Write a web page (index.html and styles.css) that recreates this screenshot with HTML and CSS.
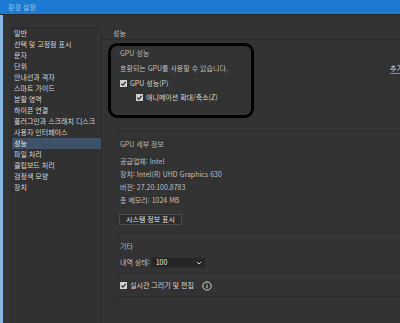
FILE: index.html
```html
<!DOCTYPE html>
<html lang="ko">
<head>
<meta charset="utf-8">
<link rel="stylesheet" href="styles.css">
</head>
<body>
<div class="titlebar">환경 설정</div>
<div class="window">
  <ul class="sidebar">
    <li>일반</li>
    <li>선택 및 고정점 표시</li>
    <li>문자</li>
    <li>단위</li>
    <li>안내선과 격자</li>
    <li>스마트 가이드</li>
    <li>분할 영역</li>
    <li>하이픈 연결</li>
    <li>플러그인과 스크래치 디스크</li>
    <li>사용자 인터페이스</li>
    <li class="active">성능</li>
    <li>파일 처리</li>
    <li>클립보드 처리</li>
    <li>검정색 모양</li>
    <li>장치</li>
  </ul>
  <div class="main">
    <div class="heading">성능</div>
    <section class="group gpu">
      <div class="annot"></div>
      <div class="title row">GPU 성능</div>
      <div class="row split"><span>호환되는 GPU를 사용할 수 있습니다.</span><span class="more">추가 정보...</span></div>
      <label class="row check"><span class="box"><svg viewBox="0 0 7 7" width="7" height="7"><rect x="0" y="0" width="7" height="7" fill="#cfcfcf"/><path d="M1.4 3.6 L2.9 5.1 L5.7 1.9" fill="none" stroke="#2a2a2a" stroke-width="1.2"/></svg></span>GPU 성능(P)</label>
      <label class="row check sub"><span class="box"><svg viewBox="0 0 7 7" width="7" height="7"><rect x="0" y="0" width="7" height="7" fill="#cfcfcf"/><path d="M1.4 3.6 L2.9 5.1 L5.7 1.9" fill="none" stroke="#2a2a2a" stroke-width="1.2"/></svg></span>애니메이션 확대/축소(Z)</label>
    </section>
    <section class="group details">
      <div class="title row">GPU 세부 정보</div>
      <div class="row info first">공급업체: Intel</div>
      <div class="row info">장치: Intel(R) UHD Graphics 630</div>
      <div class="row info">버전: 27.20.100.8783</div>
      <div class="row info">총 메모리: 1024 MB</div>
      <button class="btn">시스템 정보 표시</button>
    </section>
    <section class="group misc">
      <div class="title row">기타</div>
      <div class="row field">내역 상태: <span class="select">100<svg viewBox="0 0 6 4" width="6" height="4"><path d="M0.8 0.8 L3 3 L5.2 0.8" fill="none" stroke="#cfcfcf" stroke-width="1"/></svg></span></div>
    </section>
    <section class="group live">
      <label class="row check"><span class="box"><svg viewBox="0 0 7 7" width="7" height="7"><rect x="0" y="0" width="7" height="7" fill="#cfcfcf"/><path d="M1.4 3.6 L2.9 5.1 L5.7 1.9" fill="none" stroke="#2a2a2a" stroke-width="1.2"/></svg></span>실시간 그리기 및 편집<span class="infoicon"><svg viewBox="0 0 10 10" width="10" height="10"><circle cx="5" cy="5" r="4.2" fill="none" stroke="#cfcfcf" stroke-width="1"/><rect x="4.5" y="4.2" width="1" height="3.2" fill="#cfcfcf"/><rect x="4.5" y="2.5" width="1" height="1" fill="#cfcfcf"/></svg></span></label>
    </section>
  </div>
</div>
</body>
</html>
```

FILE: styles.css
```css
* { box-sizing: border-box; }
html, body {
  margin: 0;
  padding: 0;
  width: 400px;
  height: 323px;
  overflow: hidden;
  background: #333333;
  font-family: "Noto Sans CJK KR", "Noto Sans", sans-serif;
  font-size: 7px;
  color: #d2d2d2;
}
.titlebar {
  height: 15px;
  line-height: 14px;
  padding-left: 8px;
  background: #1c7ad2;
  border-bottom: 1px solid #262b30;
  color: #8fc0ec;
}
.window {
  display: flex;
  height: 308px;
  border-left: 3px solid #8ab6e2;
}
.sidebar {
  list-style: none;
  margin: 12px 0 0 8px;
  padding: 0;
  width: 91px;
  border: 1px solid #2a2a2a;
  border-bottom: none;
  background: #313131;
}
.sidebar li {
  height: 11px;
  line-height: 11px;
  padding-left: 2px;
  white-space: nowrap;
  color: #d4d4d4;
}
.sidebar li.active {
  background: #3e5167;
  color: #e6e6e6;
}
.main {
  flex: 1;
  min-width: 0;
}
.heading {
  margin-top: 12px;
  height: 13px;
  line-height: 12px;
  padding-left: 11px;
  border-bottom: 1px solid #2b2b2b;
  color: #bdbdbd;
}
.group {
  position: relative;
  margin-left: 13px;
  padding-left: 5px;
  border-bottom: 1px solid #2b2b2b;
}
.row {
  height: 11px;
  line-height: 11px;
  white-space: nowrap;
}
.title { color: #b4b4b4; }
.gpu { padding-top: 8px; padding-bottom: 27px; }
.gpu .split {
  margin-top: 4px;
  display: flex;
  justify-content: space-between;
  color: #bcbcbc;
}
.more {
  margin-right: -20px;
  width: 30px;
  overflow: hidden;
  border-bottom: 1px solid #8a8a8a;
  line-height: 10px;
  color: #dcdcdc;
}
.check {
  display: flex;
  align-items: center;
  gap: 2px;
}
.gpu .check { margin-top: 4px; }
.gpu .check.sub { margin-top: 3px; padding-left: 16px; }
.box { display: flex; width: 8px; }
.annot {
  position: absolute;
  left: -7px;
  top: 3px;
  width: 146px;
  height: 75px;
  border: 3px solid #000;
  border-radius: 9px;
}
.details { padding-top: 8px; padding-bottom: 8px; }
.details .info { margin-top: 2px; color: #bdbdbd; }
.details .info.first { margin-top: 6px; }
.btn {
  display: block;
  margin: 8px 0 0 -1px;
  width: 63px;
  height: 11px;
  padding: 0;
  font: inherit;
  line-height: 9px;
  color: #e0e0e0;
  background: #2c2c2c;
  border: 1px solid #4a4a4a;
}
.misc { padding-top: 7px; padding-bottom: 5px; }
.field {
  margin-top: 5px;
  display: flex;
  align-items: center;
  gap: 1px;
  color: #bdbdbd;
}
.select {
  display: flex;
  align-items: center;
  justify-content: space-between;
  width: 55px;
  height: 11px;
  padding: 0 3px 0 4px;
  background: #262626;
  border: 1px solid #2e2e2e;
  color: #e0e0e0;
}
.live { padding-top: 6px; padding-bottom: 5px; }
.live .check { color: #d8d8d8; }
.infoicon { display: flex; margin-left: 6px; }
```
